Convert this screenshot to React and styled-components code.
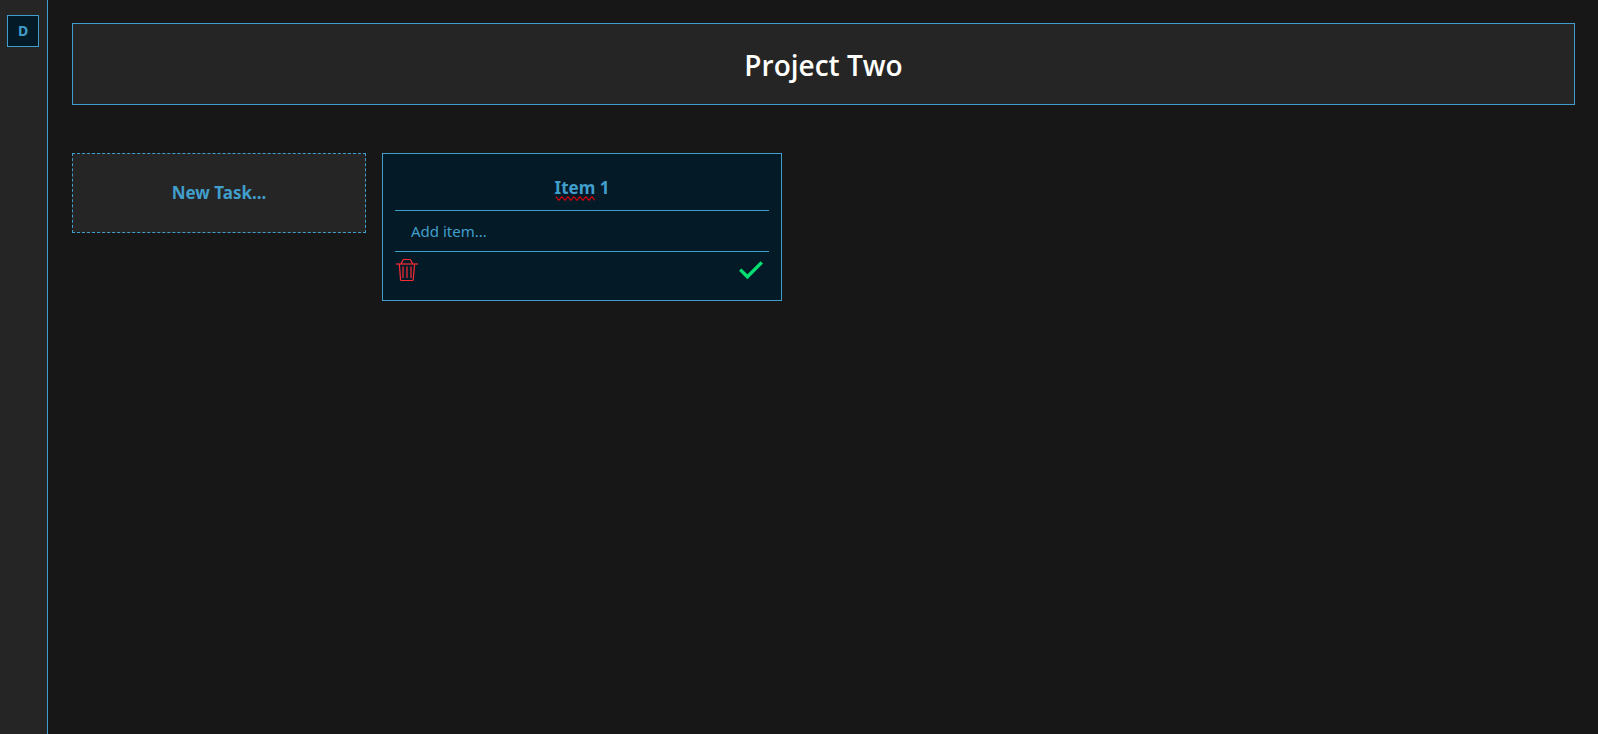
import React from "react";
import styled, { createGlobalStyle } from "styled-components";

const blue = "#419ecb";
const navy = "#041a27";
const panel = "#252525";

const GlobalStyle = createGlobalStyle`
  *, *::before, *::after { box-sizing: border-box; }
  body {
    margin: 0;
    background: #171717;
    color: ${blue};
    font-family: "Segoe UI", "Noto Sans", "Open Sans", sans-serif;
    font-size: 15px;
    line-height: 24px;
  }
  button, input { font: inherit; color: inherit; }
`;

const Page = styled.div`
  display: flex;
  min-height: 100vh;
`;

const Sidebar = styled.nav`
  flex: none;
  width: 48px;
  padding: 15px 7px;
  background: ${panel};
  border-right: 1px solid ${blue};
`;

const ProjectButton = styled.button`
  display: flex;
  align-items: center;
  justify-content: center;
  width: 32px;
  height: 32px;
  padding: 0;
  background: ${navy};
  border: 1px solid ${blue};
  font-size: 14px;
  font-weight: 700;
`;

const Main = styled.main`
  flex: 1;
  min-width: 0;
  display: flex;
  flex-direction: column;
  gap: 48px;
  padding: 23px 23px 24px 24px;
`;

const Header = styled.header`
  padding: 21px 20px 19px;
  background: ${panel};
  border: 1px solid ${blue};
  text-align: center;
`;

const Title = styled.h1`
  margin: 0;
  color: #fffffb;
  font-family: "Segoe UI", "Open Sans", "Noto Sans", sans-serif;
  font-size: 28px;
  line-height: 40px;
  font-weight: 600;
`;

const Board = styled.div`
  display: flex;
  flex-wrap: wrap;
  align-items: flex-start;
  gap: 16px;
`;

const NewTask = styled.button`
  width: 294px;
  height: 80px;
  background: ${panel};
  border: 1px dashed ${blue};
  font-size: 17px;
  font-weight: 700;
`;

const Card = styled.article`
  width: 400px;
  padding: 12px;
  background: ${navy};
  border: 1px solid ${blue};
`;

const CardTitle = styled.h2`
  margin: 0;
  padding: 8px 0;
  border-bottom: 1px solid ${blue};
  outline: none;
  text-align: center;
  font-size: 17px;
  line-height: 28px;
  font-weight: 700;
`;

const Misspelt = styled.span`
  position: relative;
`;

const Squiggle = styled.svg`
  position: absolute;
  left: 0;
  bottom: -2px;
  width: 100%;
  height: 5px;
`;

const ItemInput = styled.input`
  display: block;
  width: 100%;
  height: 41px;
  padding: 0 16px;
  background: transparent;
  border: 0;
  border-bottom: 1px solid ${blue};
  border-radius: 0;
  outline: none;
  &::placeholder { color: ${blue}; opacity: 1; }
`;

const Actions = styled.div`
  display: flex;
  justify-content: space-between;
  padding: 6px 6px 6px 0;
`;

const IconButton = styled.button`
  display: flex;
  padding: 0;
  background: none;
  border: 0;
  color: ${(p) => p.$color};
`;

function TrashIcon() {
  return (
    <svg width="24" height="24" viewBox="0 0 24 24" fill="none" stroke="currentColor" strokeWidth="1.2" aria-hidden="true">
      <path d="M1 6H23" />
      <path d="M6 6L7.8 2.2Q8.2 1.5 9 1.5H14.6Q15.4 1.5 15.8 2.2L17.6 6" />
      <path d="M4.3 6L5.6 22Q5.7 22.5 6.2 22.5H17.6Q18.1 22.5 18.2 22L19.6 6" />
      <path d="M8 8.4V20M12 8.4V20M16 8.4V20" />
    </svg>
  );
}

function CheckIcon() {
  return (
    <svg width="24" height="24" viewBox="0 0 24 24" fill="none" stroke="currentColor" strokeWidth="3.4" aria-hidden="true">
      <path d="M1.2 11.6L8.4 18.8L22.8 4.4" />
    </svg>
  );
}

export default function App() {
  return (
    <>
      <GlobalStyle />
      <Page>
        <Sidebar aria-label="Projects">
          <ProjectButton type="button">D</ProjectButton>
        </Sidebar>
        <Main>
          <Header>
            <Title>Project Two</Title>
          </Header>
          <Board>
            <NewTask type="button">New Task...</NewTask>
            <Card>
              <CardTitle contentEditable suppressContentEditableWarning spellCheck={false}>
                <Misspelt>
                  Item
                  <Squiggle viewBox="0 0 39 5" aria-hidden="true">
                    <path
                      d="M0 .7L3 4.3L6 .7L9 4.3L12 .7L15 4.3L18 .7L21 4.3L24 .7L27 4.3L30 .7L33 4.3L36 .7L39 4.3"
                      fill="none"
                      stroke="#d5030c"
                      strokeWidth="1.2"
                    />
                  </Squiggle>
                </Misspelt>{" "}
                1
              </CardTitle>
              <ItemInput type="text" aria-label="Add item" placeholder="Add item..." />
              <Actions>
                <IconButton type="button" aria-label="Delete task" $color="#fb2c36">
                  <TrashIcon />
                </IconButton>
                <IconButton type="button" aria-label="Complete task" $color="#05df72">
                  <CheckIcon />
                </IconButton>
              </Actions>
            </Card>
          </Board>
        </Main>
      </Page>
    </>
  );
}
